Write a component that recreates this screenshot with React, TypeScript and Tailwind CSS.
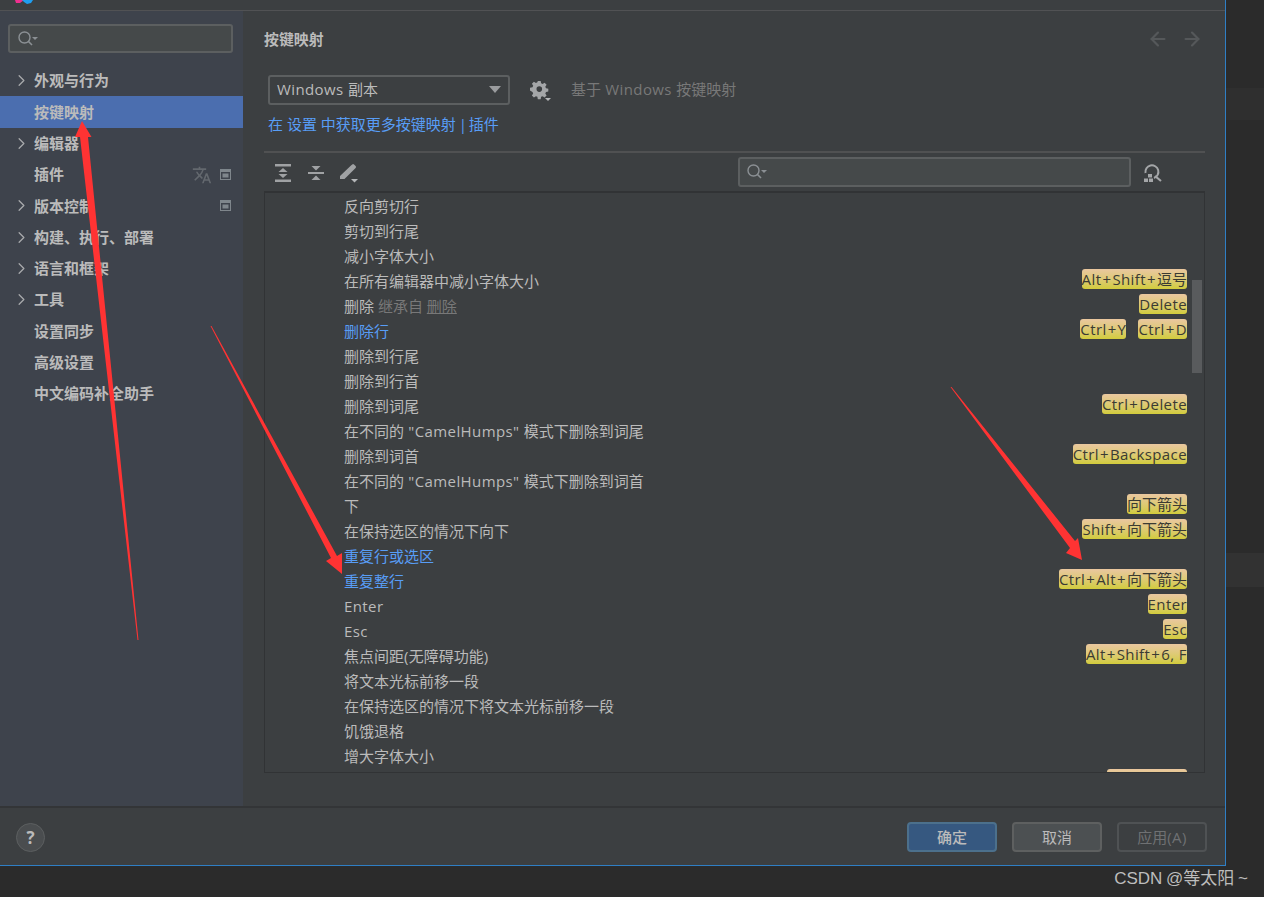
/**
 * Keymap settings dialog, with the red arrows drawn on top of it.
 */
import { ArrowLeft, ArrowRight, ChevronRight } from "lucide-react";
import { MdTranslate } from "react-icons/md";

const UI_FONT = "font-['Open_Sans','Noto_Sans_CJK_SC',sans-serif]";

interface TreeItem {
  label: string;
  arrow?: boolean;
  selected?: boolean;
  lang?: boolean;
  project?: boolean;
}

const tree: TreeItem[] = [
  { label: "外观与行为", arrow: true },
  { label: "按键映射", selected: true },
  { label: "编辑器", arrow: true },
  { label: "插件", lang: true, project: true },
  { label: "版本控制", arrow: true, project: true },
  { label: "构建、执行、部署", arrow: true },
  { label: "语言和框架", arrow: true },
  { label: "工具", arrow: true },
  { label: "设置同步" },
  { label: "高级设置" },
  { label: "中文编码补全助手" },
];

interface Row {
  label: string;
  blue?: boolean;
  inherited?: boolean;
  keys?: string[];
  cutBadge?: boolean;
}

const rows: Row[] = [
  { label: "反向剪切行" },
  { label: "剪切到行尾" },
  { label: "减小字体大小" },
  { label: "在所有编辑器中减小字体大小", keys: ["Alt+Shift+逗号"] },
  { label: "删除", inherited: true, keys: ["Delete"] },
  { label: "删除行", blue: true, keys: ["Ctrl+Y", "Ctrl+D"] },
  { label: "删除到行尾" },
  { label: "删除到行首" },
  { label: "删除到词尾", keys: ["Ctrl+Delete"] },
  { label: '在不同的 "CamelHumps" 模式下删除到词尾' },
  { label: "删除到词首", keys: ["Ctrl+Backspace"] },
  { label: '在不同的 "CamelHumps" 模式下删除到词首' },
  { label: "下", keys: ["向下箭头"] },
  { label: "在保持选区的情况下向下", keys: ["Shift+向下箭头"] },
  { label: "重复行或选区", blue: true },
  { label: "重复整行", blue: true, keys: ["Ctrl+Alt+向下箭头"] },
  { label: "Enter", keys: ["Enter"] },
  { label: "Esc", keys: ["Esc"] },
  { label: "焦点间距(无障碍功能)", keys: ["Alt+Shift+6, F"] },
  { label: "将文本光标前移一段" },
  { label: "在保持选区的情况下将文本光标前移一段" },
  { label: "饥饿退格" },
  { label: "增大字体大小" },
  { label: "", cutBadge: true },
];

// Latin runs are a little wider in the reference than in Open Sans, CJK runs are not
function T({ text }: { text: string }) {
  const parts = text.match(/[\x00-\x7f]+|[^\x00-\x7f]+/g) ?? [];
  return (
    <>
      {parts.map((p, i) =>
        p.charCodeAt(0) < 128 ? (
          <span key={i} className="tracking-[0.4px]">
            {p}
          </span>
        ) : (
          <span key={i}>{p}</span>
        ),
      )}
    </>
  );
}

// The plus signs in a shortcut have some air around them
function KeyLabel({ text }: { text: string }) {
  const parts = text.split("+");
  return (
    <>
      {parts.map((p, i) => (
        <span key={i}>
          {i > 0 && <span className="px-[1px] tracking-[0.4px]">+</span>}
          <T text={p} />
        </span>
      ))}
    </>
  );
}

function SearchIcon() {
  return (
    <svg width="24" height="18" viewBox="0 0 24 18" fill="none" className="shrink-0">
      <circle cx="7.5" cy="7.5" r="5.5" stroke="#8b9094" strokeWidth="1.4" />
      <path d="M11.5 11.5L15 15" stroke="#8b9094" strokeWidth="1.6" />
      <path d="M15 7h6l-3 3z" fill="#8b9094" />
    </svg>
  );
}

function ProjectIcon() {
  return (
    <svg width="11" height="11" viewBox="0 0 11 11">
      <rect x="0.5" y="0.5" width="10" height="10" fill="none" stroke="#7f868c" />
      <rect x="0.5" y="0.5" width="10" height="2.5" fill="#7f868c" />
      <rect x="2.5" y="4.5" width="6" height="4" fill="#7f868c" />
    </svg>
  );
}

function ExpandIcon() {
  return (
    <svg width="16" height="18" viewBox="0 0 16 18" fill="#a0a2a4">
      <rect x="0" y="0" width="16" height="2.5" />
      <rect x="0" y="15.5" width="16" height="2.5" />
      <path d="M8 4l4.5 4h-9z" />
      <path d="M8 14l4.5-4h-9z" />
    </svg>
  );
}

function CollapseIcon() {
  return (
    <svg width="16" height="18" viewBox="0 0 16 18" fill="#a0a2a4">
      <rect x="0" y="8" width="16" height="2" />
      <path d="M8 6.5L3.5 2h9z" />
      <path d="M8 11.5l4.5 4.5h-9z" />
    </svg>
  );
}

function PencilIcon() {
  return (
    <svg width="20" height="20" viewBox="0 0 20 20" fill="#a0a2a4">
      <path d="M1 13L12 2.5l1.2-1a1.3 1.3 0 0 1 1.8 0l1.6 1.6a1.3 1.3 0 0 1 0 1.8L5.5 16H1z" />
      <path d="M12 16h7l-3.5 3.5z" fill="#b5b7b9" />
    </svg>
  );
}

function GearIcon() {
  return (
    <svg width="22" height="22" viewBox="0 0 22 22" fill="#a4a6a8">
      <path
        fillRule="evenodd"
        d="M7.8 1h2.9l.4 2.3 1.5.7 2-1.3 2 2-1.3 2 .7 1.6 2.3.4v2.8l-2.3.4-.7 1.6 1.3 2-2 2-2-1.3-1.5.6-.4 2.4H7.8l-.4-2.4-1.5-.6-2 1.3-2-2 1.3-2-.7-1.6L0 10.5V7.7l2.5-.4.7-1.6-1.3-2 2-2 2 1.3 1.5-.7zM9.3 6.3a2.8 2.8 0 1 0 0 5.6 2.8 2.8 0 0 0 0-5.6z"
      />
      <path d="M15 18h6l-3 3z" fill="#b5b7b9" />
    </svg>
  );
}

function ShortcutSearchIcon() {
  return (
    <svg width="20" height="20" viewBox="0 0 20 20" fill="none">
      <path d="M2.5 10a6.5 6.5 0 1 1 8.5 5" stroke="#a4a6a8" strokeWidth="2" />
      <path d="M12 13l6 5" stroke="#a4a6a8" strokeWidth="2.2" />
      <rect x="5" y="11" width="4" height="3.5" fill="#a4a6a8" />
      <rect x="1" y="15.5" width="4" height="3.5" fill="#a4a6a8" />
      <rect x="6" y="15.5" width="4" height="3.5" fill="#a4a6a8" />
    </svg>
  );
}

function Annotations() {
  return (
    <svg className="absolute inset-0 pointer-events-none" width="1264" height="897" viewBox="0 0 1264 897">
      <polygon points="138.5,640 88,137 91.5,137 82,121 75,137 80,137 137.5,640" fill="#ff3333" />
      <polygon points="211.5,326 337,556 342,553 342,574 326,561 331,558 210.5,326" fill="#ff3333" />
      <polygon points="951.5,387 1075,541 1078,538 1082,560 1066,553 1070,548 950.5,387" fill="#ff3333" />
    </svg>
  );
}

function Button({ label, variant }: { label: string; variant: "primary" | "plain" | "off" }) {
  const look =
    variant === "primary"
      ? "bg-[#365880] border-[#4c708c] text-[#bbbbbb] font-medium"
      : variant === "plain"
        ? "bg-[#4c5052] border-[#5e6060] text-[#bbbbbb]"
        : "bg-[#3c3f41] border-[#4f5254] text-[#6f7173]";
  return (
    <button type="button" className={`w-[90px] h-[30px] rounded-[4px] border-2 text-[15px] leading-none ${look}`}>
      <T text={label} />
    </button>
  );
}

export default function App() {
  return (
    <div className={`relative w-[1264px] h-[897px] overflow-hidden bg-[#2b2b2b] ${UI_FONT}`}>
      <div className="flex h-[866px]">
        {/* Dialog */}
        <div className="w-[1226px] h-[866px] flex flex-col bg-[#3c3f41] border-r border-b border-[#2f7fc5] text-[15px] text-[#bbbbbb]">
          {/* Title bar, cut off by the screenshot */}
          <div className="h-[11px] shrink-0 border-b border-[#515254] overflow-hidden pl-[15px]">
            <svg width="18" height="4" viewBox="0 0 18 4">
              <path d="M0 0h9L5 3H1z" fill="#f0308f" />
              <path d="M7 0h11l-2 3-4 1-3-2z" fill="#1f9ef0" />
            </svg>
          </div>

          <div className="flex-1 flex min-h-0">
            {/* Sidebar */}
            <div className="w-[243px] shrink-0 bg-[#3e434c] pt-[13px]">
              <div className="ml-[8px] mr-[10px] h-[29px] flex items-center pl-[7px] rounded-[3px] border-2 border-[#5c5f60] bg-[#45494a]">
                <SearchIcon />
              </div>
              <div className="mt-[12px]">
                {tree.map((item) => (
                  <div
                    key={item.label}
                    className={`relative h-[31.3px] flex items-center pl-[34px] pr-[12px] font-semibold ${item.selected ? "bg-[#4b6eaf]" : ""}`}
                  >
                    {item.arrow && (
                      <ChevronRight size={19} strokeWidth={1.6} className="absolute left-[12px] text-[#a8aaac]" />
                    )}
                    <span className="flex-1">{item.label}</span>
                    {item.lang && <MdTranslate size={20} className="mr-[8px] text-[#63686e]" />}
                    {item.project && <ProjectIcon />}
                  </div>
                ))}
              </div>
            </div>

            {/* Keymap panel */}
            <div className="flex-1 min-w-0 pl-[21px] pr-[20px] flex flex-col">
              <div className="h-[58px] shrink-0 flex items-center justify-between pb-[1px]">
                <span className="font-semibold text-[14.9px]">按键映射</span>
                <div className="flex items-center gap-[12px] text-[#55585a] pr-[2px] mt-[-2px]">
                  <ArrowLeft size={22} strokeWidth={2.4} />
                  <ArrowRight size={22} strokeWidth={2.4} />
                </div>
              </div>

              <div className="pl-[4px] h-[31px] flex items-center shrink-0 mt-[5px]">
                <div className="w-[242px] h-[30px] rounded-[3px] border-2 border-[#5c5f60] flex items-center justify-between pl-[7px] pr-[7px]">
                  <span className="whitespace-pre">
                    <T text="Windows 副本" />
                  </span>
                  <svg width="12" height="7" viewBox="0 0 12 7">
                    <path d="M0 0h12L6 7z" fill="#9a9c9e" />
                  </svg>
                </div>
                <div className="ml-[20px] mt-[3px]">
                  <GearIcon />
                </div>
                <span className="ml-[19px] text-[#787878] whitespace-pre">
                  <T text="基于 Windows 按键映射" />
                </span>
              </div>

              <div className="pl-[4px] mt-[7px] h-[24px] flex items-center shrink-0 text-[#589df6] whitespace-pre">
                在 设置 中获取更多按键映射<span className="tracking-[-1px]"> | </span>插件
              </div>

              <div className="mt-[15px] h-[2px] shrink-0 bg-[#505152]" />

              <div className="h-[38px] shrink-0 flex items-center pl-[11px]">
                <div className="mt-[2px]">
                  <ExpandIcon />
                </div>
                <div className="ml-[17px] mt-[2px]">
                  <CollapseIcon />
                </div>
                <div className="ml-[15px] mt-[2px]">
                  <PencilIcon />
                </div>
                <div className="ml-[379px] w-[393px] h-[30px] rounded-[3px] border-2 border-[#5c5f60] bg-[#45494a] flex items-center pl-[6px]">
                  <SearchIcon />
                </div>
                <div className="ml-[12px] mt-[2px]">
                  <ShortcutSearchIcon />
                </div>
              </div>

              {/* Action table */}
              <div className="relative h-[582px] shrink-0 border border-[#313335] border-t-2 overflow-hidden pt-[1px]">
                {rows.map((row, i) => (
                  <div key={i} className="h-[25px] flex justify-between pl-[79px] pr-[17px]">
                    <span className={`leading-[25px] whitespace-pre ${row.blue ? "text-[#589df6]" : ""}`}>
                      <T text={row.label} />
                      {row.inherited && (
                        <span className="text-[#787878]">
                          {" 继承自 "}
                          <span className="underline">删除</span>
                        </span>
                      )}
                    </span>
                    <div className="flex gap-[12px] items-start">
                      {row.keys?.map((k) => (
                        <span
                          key={k}
                          className="h-[20px] rounded-[3px] bg-gradient-to-b from-[#eac79f] to-[#d2cc3a] text-[#3b3b33] text-[15px] leading-[20px] whitespace-pre"
                        >
                          <KeyLabel text={k} />
                        </span>
                      ))}
                      {row.cutBadge && (
                        <span className="w-[80px] h-[20px] rounded-[3px] bg-gradient-to-b from-[#eac79f] to-[#d2cc3a]" />
                      )}
                    </div>
                  </div>
                ))}
                <div className="absolute right-[2px] top-[87px] w-[10px] h-[93px] bg-[#595b5d]" />
              </div>
            </div>
          </div>

          {/* Footer */}
          <div className="h-[59px] shrink-0 border-t-2 border-[#333537] flex items-center justify-between pl-[16px] pr-[18px]">
            <div className="mt-[2px] w-[29px] h-[29px] rounded-full bg-[#4a4d4f] border border-[#5c5f60] flex items-center justify-center text-[#bbbbbb] text-[17px] font-bold">
              ?
            </div>
            <div className="flex gap-[15px] mt-[1px]">
              <Button label="确定" variant="primary" />
              <Button label="取消" variant="plain" />
              <Button label="应用(A)" variant="off" />
            </div>
          </div>
        </div>

        {/* IDE behind the dialog */}
        <div className="flex-1">
          <div className="h-[32px] mt-[88px] bg-[#2f2f2f]" />
          <div className="h-[34px] mt-[433px] bg-[#323232]" />
        </div>
      </div>

      <div className="h-[31px] flex items-center justify-end pr-[16px] pb-[6px] text-[17px] text-[#bdbdbd] [word-spacing:-1px] font-['Liberation_Sans','Noto_Sans_CJK_SC',sans-serif]">
        CSDN @等太阳 ~
      </div>

      <Annotations />
    </div>
  );
}
